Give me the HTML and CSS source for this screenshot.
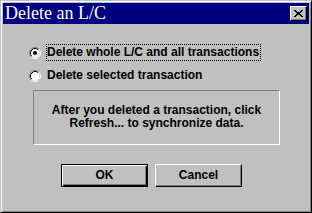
FILE: index.html
```html
<!DOCTYPE html>
<html>
<head>
<meta charset="utf-8">
<link rel="stylesheet" href="styles.css">
</head>
<body>
<div class="window">
  <div class="titlebar">
    <span class="title">Delete an L/C</span>
    <div class="close">
      <svg width="9" height="7" viewBox="0 0 9 7" shape-rendering="crispEdges">
        <path d="M0 0h2v1h-2zM7 0h2v1h-2zM1 1h2v1h-2zM6 1h2v1h-2zM2 2h5v1h-5zM3 3h3v1h-3zM2 4h5v1h-5zM1 5h2v1h-2zM6 5h2v1h-2zM0 6h2v1h-2zM7 6h2v1h-2z" fill="#000"/>
      </svg>
    </div>
  </div>
  <div class="client">
    <div class="option">
      <svg class="radio" width="12" height="12" viewBox="0 0 12 12">
        <circle cx="6" cy="6" r="4.5" fill="#fff"/>
        <path d="M2.11 9.89A5.5 5.5 0 0 1 9.89 2.11" fill="none" stroke="#808080"/>
        <path d="M9.89 2.11A5.5 5.5 0 0 1 2.11 9.89" fill="none" stroke="#fff"/>
        <path d="M2.82 9.18A4.5 4.5 0 0 1 9.18 2.82" fill="none" stroke="#000"/>
        <path d="M9.18 2.82A4.5 4.5 0 0 1 2.82 9.18" fill="none" stroke="#dfdfdf"/>
        <circle cx="6" cy="6" r="2" fill="#000"/>
      </svg>
      <span class="label focus">Delete whole L/C and all transactions</span>
    </div>
    <div class="option">
      <svg class="radio" width="12" height="12" viewBox="0 0 12 12">
        <circle cx="6" cy="6" r="4.5" fill="#fff"/>
        <path d="M2.11 9.89A5.5 5.5 0 0 1 9.89 2.11" fill="none" stroke="#808080"/>
        <path d="M9.89 2.11A5.5 5.5 0 0 1 2.11 9.89" fill="none" stroke="#fff"/>
        <path d="M2.82 9.18A4.5 4.5 0 0 1 9.18 2.82" fill="none" stroke="#000"/>
        <path d="M9.18 2.82A4.5 4.5 0 0 1 2.82 9.18" fill="none" stroke="#dfdfdf"/>
      </svg>
      <span class="label">Delete selected transaction</span>
    </div>
    <div class="note">After you deleted a transaction, click<br>Refresh... to synchronize data.</div>
    <div class="buttons">
      <div class="btn default"><span>OK</span></div>
      <div class="btn"><span>Cancel</span></div>
    </div>
  </div>
</div>
</body>
</html>
```
FILE: styles.css
```css
html, body {
  margin: 0;
  padding: 0;
  background: #c0c0c0;
}
.window {
  box-sizing: border-box;
  width: 312px;
  height: 213px;
  background: #c0c0c0;
  border: 1px solid;
  border-color: #c0c0c0 #000 #000 #c0c0c0;
  box-shadow: inset 1px 1px #fff, inset -1px -1px #808080;
  padding: 2px;
  display: flex;
  flex-direction: column;
}
.titlebar {
  height: 21px;
  background: #000080;
  display: flex;
  align-items: center;
  justify-content: space-between;
  padding: 0 2px 0 2px;
}
.title {
  font-family: "Liberation Serif", serif;
  font-size: 18px;
  line-height: 21px;
  color: #fff;
}
.close {
  box-sizing: border-box;
  width: 17px;
  height: 15px;
  background: #c0c0c0;
  border: 1px solid;
  border-color: #fff #000 #000 #fff;
  box-shadow: inset -1px -1px #808080;
  display: flex;
  align-items: center;
  justify-content: center;
  padding-bottom: 1px;
}
.client {
  padding: 20px 0 0 26px;
  font-family: "Liberation Sans", Arial, sans-serif;
  font-weight: bold;
  font-size: 12px;
  color: #000;
}
.option {
  display: flex;
  align-items: center;
  gap: 5px;
  height: 17px;
  margin-bottom: 6px;
}
.radio {
  display: block;
  flex: none;
}
.label {
  border: 1px dotted transparent;
  line-height: 15px;
  padding: 0 1px 0 0;
}
.label.focus {
  border-color: #000;
}
.note {
  box-sizing: border-box;
  width: 247px;
  height: 55px;
  margin: 2px 0 0 4px;
  border: 1px solid;
  border-color: #808080 #fff #fff #808080;
  text-align: center;
  line-height: 13px;
  padding-top: 13px;
}
.buttons {
  display: flex;
  gap: 7px;
  margin: 19px 0 0 32px;
}
.btn {
  box-sizing: border-box;
  width: 87px;
  height: 23px;
  border: 1px solid;
  border-color: #fff #000 #000 #fff;
  box-shadow: inset -1px -1px #808080;
  display: flex;
  align-items: center;
  justify-content: center;
  line-height: 15px;
}
.btn.default {
  border: 1px solid #000;
  box-shadow: inset 1px 1px #fff, inset -1px -1px #000, inset -2px -2px #808080;
}
```
